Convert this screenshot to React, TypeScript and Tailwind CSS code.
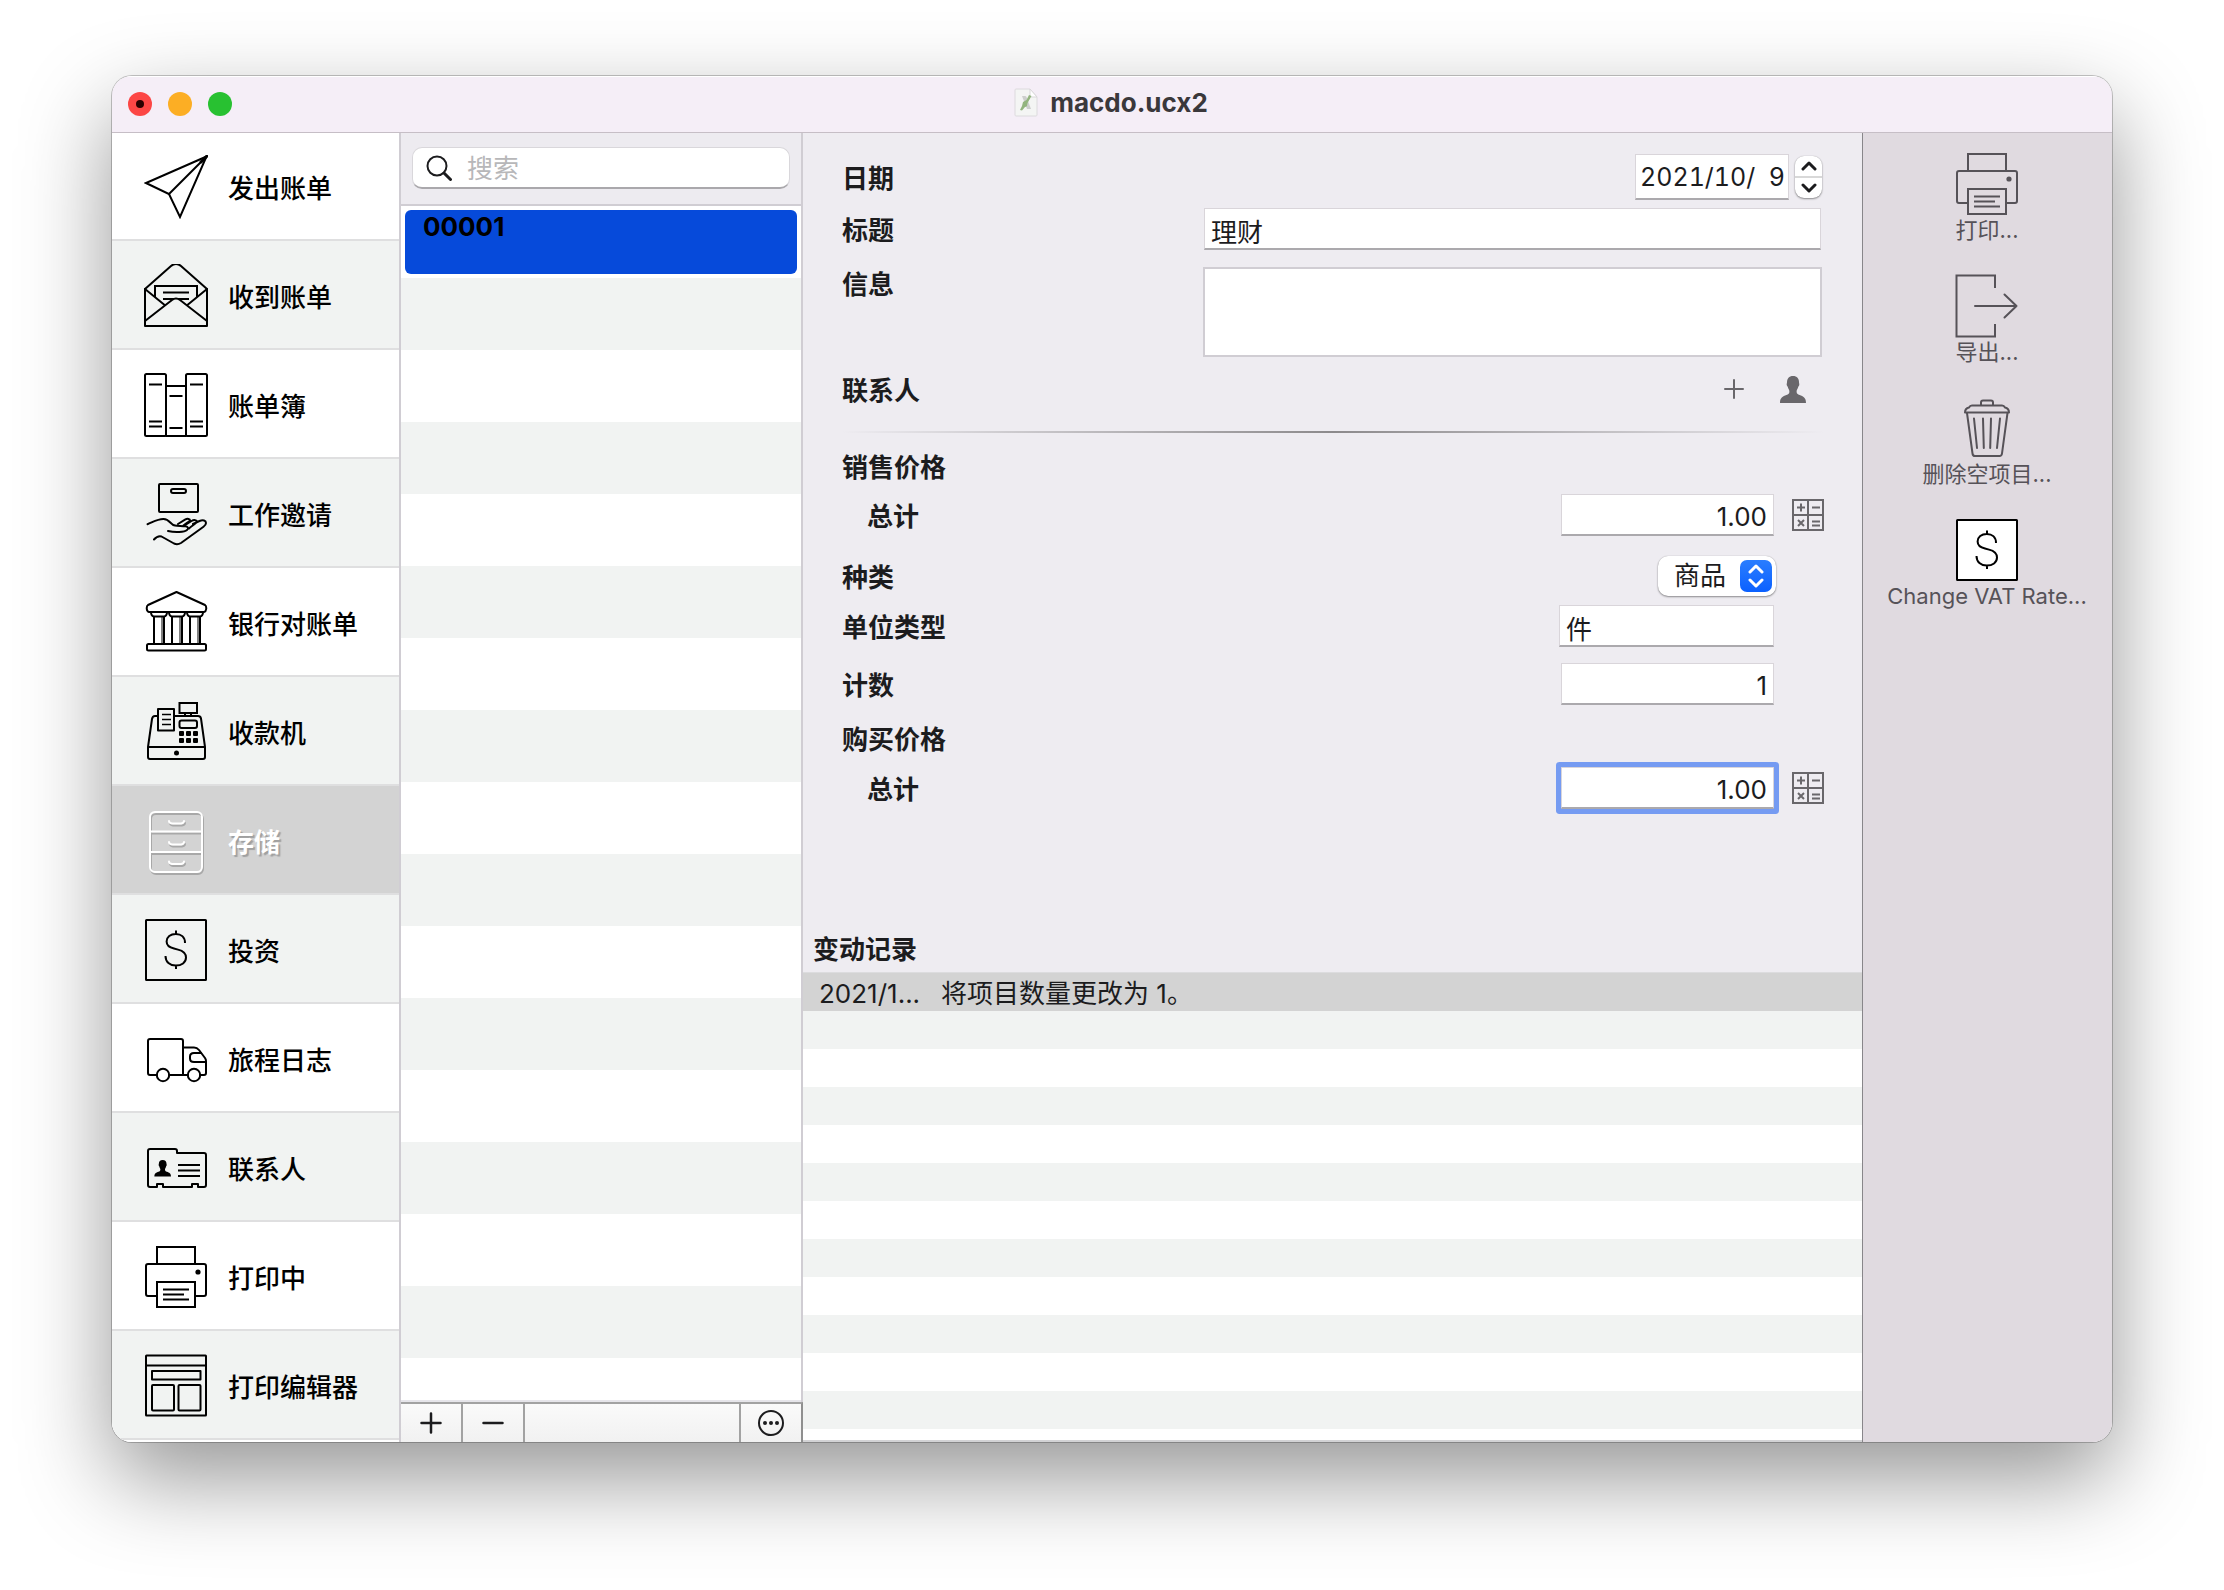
import React, { useState } from "react";

const FONT = "font-['Inter','Noto_Sans_CJK_SC',sans-serif]";

type IconProps = { children: React.ReactNode; className?: string };

function Icon({ children, className = "" }: IconProps) {
  return (
    <svg
      viewBox="0 0 64 64"
      className={`h-16 w-16 shrink-0 ${className}`}
      fill="none"
      stroke="currentColor"
      strokeWidth="2"
      strokeLinejoin="round"
      strokeLinecap="round"
      aria-hidden="true"
    >
      {children}
    </svg>
  );
}

const PlaneIcon = () => (
  <Icon>
    <path strokeLinejoin="miter" d="M62.5 1.5 2 28l23 11 11 23z" />
    <path d="M62.5 1.5 25 39" />
    <path d="M62.5 1.5 57 7" strokeWidth="3" />
  </Icon>
);

const EnvelopeIcon = () => (
  <Icon>
    <path d="M1 25 27 2q5-4 10 0l26 23v37H1z" />
    <path strokeLinejoin="miter" d="M11 33V22h42v11M19 28.500h26M19 35h26" strokeLinecap="butt" />
    <path d="M1 25l19 15.500M63 25 44 40.500" />
    <path d="M1 57 28 36q4-3 8 0l27 21" className="fill-[#f1f3f2]" />
  </Icon>
);

const BindersIcon = () => (
  <Icon>
    <rect x="1" y="1" width="21" height="62" rx="1.500" />
    <rect x="42" y="1" width="21" height="62" rx="1.500" />
    <path d="M22 13h20M22 63h20" />
    <path strokeLinecap="butt" d="M5 11.500h13M5 48.500h13M5 53.500h13M46 11.500h13M46 48.500h13M46 53.500h13M25.500 23h13M25.500 55h13" />
  </Icon>
);

const HandIcon = () => (
  <Icon>
    <rect x="15" y="2" width="39" height="28" rx="1" />
    <rect x="27" y="7" width="15" height="4" rx="2" />
    <path d="M3.500 42.200C9 40 14 36.800 19.500 37c6.500.2 6.500 5.500 11.500 6.500 3 .6 7 .2 10.500.8 2.500.5 3.500 2.200 1.500 3.700-2.500 2.200-12 2.700-19 1" />
    <path d="M34 42l7-4.300c2.500-1.500 5-.8 5 .5 0 1.200-4 2.800-6.500 5.300M40.500 43.500l7-4.500c2.500-1.500 5.500-1 5.500.8 0 1.200-5 3.700-8 6.700M49 42l6.500-3c3.500-1.500 6.500-.5 6.500 2 0 1.500-1 2.600-2.500 3.700L37 61q-3.500 2-7 0.500l-12.500-7q-4-1-7.500 3" />
  </Icon>
);

const BankIcon = () => (
  <Icon>
    <path d="M32.500 1 61 14q1.500 1 1.200 4-.2 2.500-2.200 3H5q-2-.5-2.200-3-.3-3 1.200-4z" />
    <rect x="3" y="53" width="59" height="6.500" rx="1.500" />
    {[7, 25, 43].map((x) => (
      <g key={x}>
        <path d={`M${x} 21q0 4 3 4.500h10q3-.5 3-4.500`} />
        <path d={`M${x + 3} 26v27M${x + 13} 26v27`} />
        <path strokeWidth="1" d={`M${x + 11} 26v27`} />
      </g>
    ))}
  </Icon>
);

const RegisterIcon = () => (
  <Icon>
    <path d="M30 16h24q2.500 0 3 2.500L61 47v10q0 2-2 2H6q-2 0-2-2V47l4-28q.5-3 3-3h3M4 47h57" />
    <rect x="14" y="9" width="16" height="21.500" />
    <path strokeWidth="1.500" strokeLinecap="butt" d="M18 14.500h9M18 19.500h9M18 24.500h9" />
    <rect x="35.500" y="3" width="17.500" height="10" strokeLinejoin="miter" />
    <path d="M41 13v3M47 13v3" />
    <rect x="35.500" y="20.500" width="17.500" height="7.500" rx="2" />
    <g fill="currentColor" stroke="none">
      {[35, 42, 49].map((x) => (
        <g key={x}>
          <rect x={x} y="31" width="5" height="5" rx="1" />
          <rect x={x} y="38" width="5" height="5" rx="1" />
        </g>
      ))}
      <circle cx="32.500" cy="53" r="2.500" />
    </g>
  </Icon>
);

const CabinetIcon = () => (
  <Icon className="drop-shadow-[1px_2px_0_#a8a8a8]">
    <rect x="6" y="3" width="52" height="60" rx="5" />
    <path d="M6 22.500h52M6 43h52" />
    <path d="M25 12q0 2 3 2.500h9q3-.5 3-2.500M25 33q0 2 3 2.500h9q3-.5 3-2.500M25 52.500q0 2 3 2.500h9q3-.5 3-2.500" />
  </Icon>
);

const DollarIcon = ({ filled = false }: { filled?: boolean }) => (
  <Icon>
    <rect x="2" y="2" width="60" height="60" rx="0.500" className={filled ? "fill-white" : "fill-none"} />
    <path
      strokeLinecap="butt"
      d="M41 25c0-6-4-9-9.200-9-5.300 0-9.200 3-9.200 7.600 0 4.200 3 6 7.400 7l4 1c5 1.200 8 3.200 8 8 0 5-4.500 8-10.200 8-6 0-10.300-3.600-10.300-9.600M32 12.500V16M32 47.500V51"
    />
  </Icon>
);

const TruckIcon = () => (
  <Icon>
    <path d="M13 48H6q-2 0-2-2V14q0-2 2-2h31q2 0 2 2v34M25 48h19" />
    <path d="M39 20.500h11q3 0 5 2.500l6 8q1 1.500 1 3v12q0 2-2 2h-4" />
    <path d="M62 35H50q-4 0-4-3.500v-2q0-3.500 4-3.500h7" />
    <circle cx="19" cy="48" r="6.200" />
    <circle cx="50" cy="48" r="6.200" />
  </Icon>
);

const PERSON =
  "M12 0c4 0 6 2.600 6 6.200 0 1.200.6 1.600.2 3-.3 1-.8 1-1 1.800-.4 1.800-1.600 3-1.600 4.400 0 2.200 1 2.900 3 3.700 3.600 1.300 6.400 2.600 6.400 7.900H-1c0-5.300 2.800-6.600 6.400-7.900 2-.8 3-1.500 3-3.700 0-1.400-1.200-2.600-1.600-4.400-.2-.8-.7-.8-1-1.800-.4-1.400.2-1.800.2-3C6 2.600 8 0 12 0z";

const CardIcon = () => (
  <Icon>
    <path d="M13 51H6q-2 0-2-2V15q0-2 2-2h25q2 0 2 2v2h27q2 0 2 2v30q0 2-2 2h-6v-3h-6v3H19v-3h-6z" />
    <path d={PERSON} transform="translate(11 24) scale(0.64 0.61)" fill="currentColor" stroke="none" />
    <path strokeLinecap="butt" d="M34 29h22M34 34.500h22M34 40h22" />
  </Icon>
);

const PrinterIcon = () => (
  <Icon>
    <path strokeLinejoin="miter" strokeLinecap="butt" d="M13 19V2h38v17" />
    <path strokeLinecap="butt" d="M13 51H4q-2 0-2-2V21q0-2 2-2h56q2 0 2 2v28q0 2-2 2h-9" />
    <path strokeLinejoin="miter" d="M13 37h38v25H13z" />
    <path strokeLinecap="butt" d="M19 44.500h26M19 49.500h21M19 54.500h26" />
    <circle cx="54" cy="27" r="2.600" fill="currentColor" stroke="none" />
  </Icon>
);

const LayoutIcon = () => (
  <Icon>
    <rect x="2" y="1.500" width="60" height="60" rx="0.500" />
    <path d="M2 11.500h60" />
    <rect x="8" y="17" width="48.500" height="8.500" />
    <rect x="8" y="31" width="22" height="25.500" rx="1" />
    <rect x="34.500" y="31" width="22" height="25.500" rx="1" />
  </Icon>
);

const ExportIcon = () => (
  <Icon>
    <path strokeLinejoin="miter" strokeLinecap="butt" d="M40 14V1.500H1.500v61H40V50" />
    <path d="M20 32h41.500M49.500 20.500l12 11.500-12 11.500" />
  </Icon>
);

const TrashIcon = () => (
  <Icon>
    <path d="M26 9V6.500Q26 4.500 28 4.500h8q2 0 2 2V9" />
    <path d="M17 9.500h30q2 0 3 2 4 1 4 5H10q0-4 4-5 1-2 3-2z" />
    <path d="M12 17l5.500 40.500q.3 2.500 2.500 2.500h24.500q2.200 0 2.500-2.500L52.500 17" />
    <path d="M19 22.500l3 29.500M28 22.500l.8 29.500M36 22.500l-.8 29.500M45 22.500l-3 29.500" />
  </Icon>
);

const CalculatorIcon = () => (
  <svg viewBox="0 0 32 32" className="h-8 w-8" fill="none" stroke="#69676b" strokeWidth="2" aria-hidden="true">
    <path d="M1 1h30v30H1zM16 1v30M1 16h30" />
    <path d="M5 8.500h8M9 4.500v8M20 8.500h8M6 21l6 6M12 21l-6 6M20 22.500h8M20 26.500h8" />
  </svg>
);

const DocumentIcon = () => (
  <svg viewBox="0 0 26 30" className="h-[30px] w-[26px]" aria-hidden="true">
    <path d="M2 2q0-1 1-1h14l7 8v18q0 1-1 1H3q-1 0-1-1z" fill="#f4f5f4" stroke="#dcdadd" strokeWidth="1" />
    <path d="M17 1v7q0 1 1 1h6z" fill="#fff" stroke="#d9d7da" strokeWidth="1" />
    <path d="M9 8h3q1 0 1.500 1L18 21h-4z" fill="#cdcfcd" />
    <path d="M16 7l2.500 1-4 7-.5 3q-1 1-2 1l-3 3.500L7 22l2-4 1-4 3.500-2z" fill="#93b57f" />
  </svg>
);

const MENU = [
  { label: "发出账单", icon: <PlaneIcon /> },
  { label: "收到账单", icon: <EnvelopeIcon /> },
  { label: "账单簿", icon: <BindersIcon /> },
  { label: "工作邀请", icon: <HandIcon /> },
  { label: "银行对账单", icon: <BankIcon /> },
  { label: "收款机", icon: <RegisterIcon /> },
  { label: "存储", icon: <CabinetIcon />, active: true },
  { label: "投资", icon: <DollarIcon /> },
  { label: "旅程日志", icon: <TruckIcon /> },
  { label: "联系人", icon: <CardIcon /> },
  { label: "打印中", icon: <PrinterIcon /> },
  { label: "打印编辑器", icon: <LayoutIcon /> },
];

function Sidebar() {
  return (
    <nav className="w-[289px] shrink-0 border-r-2 border-[#d0cdd3] bg-white">
      {MENU.map((m, i) => (
        <button
          key={m.label}
          type="button"
          aria-current={m.active ? "page" : undefined}
          className={`flex h-[109px] w-full items-center gap-5 border-b-2 border-[#dfdfe0] pt-0.5 pl-8 text-left text-[26px] leading-9 ${
            m.active
              ? "bg-[#d3d3d3] font-bold text-white [text-shadow:2px_2px_1px_#a0a0a0]"
              : i % 2
                ? "bg-[#f1f3f2] font-medium text-black"
                : "bg-white font-medium text-black"
          }`}
        >
          {m.icon}
          <span className="pt-[5px]">{m.label}</span>
        </button>
      ))}
    </nav>
  );
}

function RecordList() {
  return (
    <section className="flex w-[402px] shrink-0 flex-col border-r-2 border-[#d0cdd3]">
      <div className="border-b-2 border-[#d0cdd3] bg-[#edebf0] px-[11px] pt-[15px] pb-[15px]">
        <label className="flex h-[42px] items-center gap-[15px] rounded-[10px] border border-b-2 border-[#d9d7db] border-b-[#aaa8ac] bg-white px-[13px]">
          <svg viewBox="0 0 26 26" className="h-[26px] w-[26px] shrink-0" fill="none" stroke="#1c1c1e" strokeLinecap="round" aria-hidden="true">
            <circle cx="11" cy="11" r="9.500" strokeWidth="2" />
            <path d="M18 18l6.500 6.500" strokeWidth="3" />
          </svg>
          <input
            type="search"
            aria-label="搜索"
            placeholder="搜索"
            className="min-w-0 flex-1 bg-transparent pt-0.5 text-[26px] leading-9 outline-none placeholder:text-[#b7b7b9]"
          />
        </label>
      </div>
      <ul className="flex-1 border-b-2 border-[#e6e5ea] bg-[repeating-linear-gradient(#fff_0_72px,#f1f3f2_72px_144px)]">
        <li className="h-[72px] p-1">
          <button
            type="button"
            className="flex h-16 w-full items-start rounded-md bg-[#064ada] px-[18px] text-left text-[26px] leading-[34px] font-bold text-black"
          >
            00001
          </button>
        </li>
      </ul>
      <div className="-mr-0.5 flex h-10 border-t-2 border-r-2 border-[#a2a2a2] border-r-[#8f8f8f] bg-linear-to-b from-[#fafafa] to-[#f1f1f1] text-[#1c1c1e]">
        <button type="button" aria-label="添加" className="flex w-[62px] items-center justify-center border-r-2 border-[#a2a2a2]">
          <svg viewBox="0 0 22 22" className="h-[22px] w-[22px]" stroke="currentColor" strokeWidth="2.500" strokeLinecap="round">
            <path d="M1.500 11h19M11 1.500v19" />
          </svg>
        </button>
        <button type="button" aria-label="移除" className="flex w-[62px] items-center justify-center border-r-2 border-[#a2a2a2]">
          <svg viewBox="0 0 22 22" className="h-[22px] w-[22px]" stroke="currentColor" strokeWidth="2.500" strokeLinecap="round">
            <path d="M1.500 11h19" />
          </svg>
        </button>
        <div className="flex-1" />
        <button type="button" aria-label="更多" className="flex w-[62px] items-center justify-center border-l-2 border-[#a2a2a2]">
          <svg viewBox="0 0 26 26" className="h-[26px] w-[26px]" fill="none" stroke="currentColor" strokeWidth="2">
            <circle cx="13" cy="13" r="12" />
            <g fill="currentColor" stroke="none">
              <circle cx="7" cy="13" r="2" />
              <circle cx="13" cy="13" r="2" />
              <circle cx="19" cy="13" r="2" />
            </g>
          </svg>
        </button>
      </div>
    </section>
  );
}

const LABEL = "text-[26px] leading-9 font-bold";
const FIELD =
  "h-[42px] border border-b-2 border-[#d9d5da] border-b-[#aba9ad] bg-white px-[6px] pt-1 text-[26px] leading-9 outline-none";

function DetailForm() {
  const [form, setForm] = useState({
    date: "2021/10/  9",
    title: "理财",
    info: "",
    sale: "1.00",
    kind: "商品",
    unit: "件",
    count: "1",
    buy: "1.00",
  });
  const bind = (key: keyof typeof form) => ({
    id: key,
    value: form[key],
    onChange: (e: React.ChangeEvent<HTMLInputElement | HTMLTextAreaElement | HTMLSelectElement>) =>
      setForm({ ...form, [key]: e.target.value }),
  });

  return (
    <form className="flex flex-col pt-[22px] pr-[38px] pl-[39px]" onSubmit={(e) => e.preventDefault()}>
      <div className="flex items-center justify-between pr-0.5">
        <label htmlFor="date" className={`${LABEL} pt-1`}>
          日期
        </label>
        <div className="flex items-center gap-[6px]">
          <input
            {...bind("date")}
            className="h-[46px] w-[154px] border border-b-2 border-[#d9d5da] border-b-[#aba9ad] bg-white px-1 text-[25px] leading-9 tabular-nums outline-none"
          />
          <div className="flex h-[42px] w-[27px] flex-col rounded-[9px] bg-white shadow-[0_1px_2px_#0006,0_0_1px_#0004]">
            <button type="button" aria-label="增加" className="flex flex-1 items-center justify-center border-b-2 border-[#d8d8d8]">
              <svg viewBox="0 0 16 10" className="h-[10px] w-4" fill="none" stroke="#1c1c1e" strokeWidth="3" strokeLinecap="round" strokeLinejoin="round">
                <path d="M2 8l6-6 6 6" />
              </svg>
            </button>
            <button type="button" aria-label="减少" className="flex flex-1 items-center justify-center">
              <svg viewBox="0 0 16 10" className="h-[10px] w-4" fill="none" stroke="#1c1c1e" strokeWidth="3" strokeLinecap="round" strokeLinejoin="round">
                <path d="M2 2l6 6 6-6" />
              </svg>
            </button>
          </div>
        </div>
      </div>

      <div className="mt-2 flex items-center pr-[3px]">
        <label htmlFor="title" className={`${LABEL} w-[362px] shrink-0 pt-1`}>
          标题
        </label>
        <input {...bind("title")} className={`${FIELD} min-w-0 flex-1`} />
      </div>

      <div className="mt-[17px] flex items-start pr-0.5">
        <label htmlFor="info" className={`${LABEL} w-[361px] shrink-0`}>
          信息
        </label>
        <textarea
          {...bind("info")}
          className="h-[90px] min-w-0 flex-1 resize-none border-2 border-[#d0cdd3] bg-white px-1 text-[26px] leading-9 outline-none"
        />
      </div>

      <div className="mt-3 flex h-10 items-center justify-between pr-[18px]">
        <span className={`${LABEL} pt-1`}>联系人</span>
        <div className="flex items-center gap-9 text-[#69676b]">
          <button type="button" aria-label="添加联系人">
            <svg viewBox="0 0 20 20" className="h-5 w-5" stroke="currentColor" strokeWidth="2" strokeLinecap="round">
              <path d="M1 10h18M10 1v18" />
            </svg>
          </button>
          <button type="button" aria-label="选择联系人">
            <svg viewBox="-1 0 26 27" className="h-[27px] w-[26px]" fill="currentColor">
              <path d={PERSON} />
            </svg>
          </button>
        </div>
      </div>

      <hr className="mt-[22px] h-0.5 border-0 bg-linear-to-r from-transparent via-[#8c8a8c] to-transparent" />

      <h2 className={`${LABEL} mt-[17px]`}>销售价格</h2>
      <div className="mt-2 flex items-center">
        <label htmlFor="sale" className={`${LABEL} flex-1 pt-1 pl-[25px]`}>
          总计
        </label>
        <input {...bind("sale")} className={`${FIELD} w-[213px] text-right`} />
        <button type="button" aria-label="计算销售价格" className="ml-[18px]">
          <CalculatorIcon />
        </button>
      </div>

      <div className="mt-5 flex items-center justify-between pr-12">
        <label htmlFor="kind" className={`${LABEL} pt-1`}>
          种类
        </label>
        <div className="relative">
          <select
            {...bind("kind")}
            className="block h-10 w-[118px] appearance-none rounded-[10px] bg-white pl-4 text-[26px] leading-9 shadow-[0_1px_2px_#0006,0_0_1px_#0004] outline-none"
          >
            <option>商品</option>
          </select>
          <span className="pointer-events-none absolute top-1 right-1 flex h-8 w-8 items-center justify-center rounded-[7px] bg-linear-to-b from-[#2a7dff] to-[#0a60ff]">
            <svg viewBox="0 0 16 24" className="h-6 w-4" fill="none" stroke="#fff" strokeWidth="3" strokeLinecap="round" strokeLinejoin="round">
              <path d="M2 8l6-6 6 6M2 16l6 6 6-6" />
            </svg>
          </span>
        </div>
      </div>

      <div className="mt-[9px] flex items-center justify-between pr-[50px]">
        <label htmlFor="unit" className={`${LABEL} pt-1`}>
          单位类型
        </label>
        <input {...bind("unit")} className={`${FIELD} w-[215px]`} />
      </div>

      <div className="mt-4 flex items-center justify-between pr-[50px]">
        <label htmlFor="count" className={`${LABEL} pt-1`}>
          计数
        </label>
        <input {...bind("count")} className={`${FIELD} w-[213px] text-right`} />
      </div>

      <h2 className={`${LABEL} mt-[17px]`}>购买价格</h2>
      <div className="mt-[9px] flex items-center">
        <label htmlFor="buy" className={`${LABEL} flex-1 pt-1 pl-[25px]`}>
          总计
        </label>
        <input {...bind("buy")} className={`${FIELD} w-[213px] rounded-[1px] text-right shadow-[0_0_0_5px_#759bf2] outline-2 -outline-offset-1 outline-[#628be8]`} />
        <button type="button" aria-label="计算购买价格" className="ml-[18px]">
          <CalculatorIcon />
        </button>
      </div>
    </form>
  );
}

function History() {
  return (
    <section className="flex flex-1 flex-col">
      <h2 id="history" className={`${LABEL} px-[10px] pb-1`}>
        变动记录
      </h2>
      <div className="flex-1 border-t border-b-2 border-[#dcdcde] border-b-[#d3d3d5] bg-[repeating-linear-gradient(#fff_0_38px,#f1f3f2_38px_76px)]">
        <table aria-labelledby="history" className="w-full table-fixed">
          <tbody>
            <tr className="bg-[#d3d3d3] text-[26px] leading-[34px]">
              <td className="w-[134px] pt-1 pl-4">2021/1...</td>
              <td className="pt-1 pl-1">将项目数量更改为 1。</td>
            </tr>
          </tbody>
        </table>
      </div>
    </section>
  );
}

const ACTIONS = [
  { label: "打印...", icon: <PrinterIcon /> },
  { label: "导出...", icon: <ExportIcon /> },
  { label: "删除空项目...", icon: <TrashIcon /> },
  { label: "Change VAT Rate...", icon: <DollarIcon filled />, dark: true },
];

function Actions() {
  return (
    <aside className="flex w-[250px] shrink-0 flex-col items-center gap-[30px] border-l border-[#88868a] bg-[#e0dae0] pt-5 pr-px">
      {ACTIONS.map((a) => (
        <button key={a.label} type="button" className="flex flex-col items-center text-[22px] leading-7 text-[#565258]">
          <span className={a.dark ? "text-black" : ""}>{a.icon}</span>
          {a.label}
        </button>
      ))}
    </aside>
  );
}

export default function App() {
  return (
    <div className={`${FONT} flex min-h-screen bg-white px-28 pt-[76px] pb-[148px] text-[#1c1c1e]`}>
      <main className="flex min-w-0 flex-1 flex-col overflow-hidden rounded-[20px] shadow-[0_36px_90px_rgba(0,0,0,0.42),0_0_0_1px_rgba(0,0,0,0.22)]">
        <header className="relative z-10 flex h-14 shrink-0 items-center justify-center bg-[#f5eef7] shadow-[0_1px_0_#c6bec6,inset_0_1px_0_#fff]">
          <div className="absolute left-4 flex gap-4">
            <button type="button" aria-label="关闭" className="flex h-6 w-6 items-center justify-center rounded-full bg-[#fc4645]">
              <span className="h-2 w-2 rounded-full bg-[#2b0000]" />
            </button>
            <button type="button" aria-label="最小化" className="h-6 w-6 rounded-full bg-[#fcae24]" />
            <button type="button" aria-label="缩放" className="h-6 w-6 rounded-full bg-[#28c131]" />
          </div>
          <div className="flex items-center gap-[11px] pr-[3px] pb-0.5">
            <DocumentIcon />
            <h1 className="text-[26px] leading-8 font-bold text-[#3a383b]">macdo.ucx2</h1>
          </div>
        </header>
        <div className="flex flex-1 bg-[#eeecf1]">
          <Sidebar />
          <RecordList />
          <div className="flex min-w-0 flex-1 flex-col gap-[123px]">
            <DetailForm />
            <History />
          </div>
          <Actions />
        </div>
      </main>
    </div>
  );
}
